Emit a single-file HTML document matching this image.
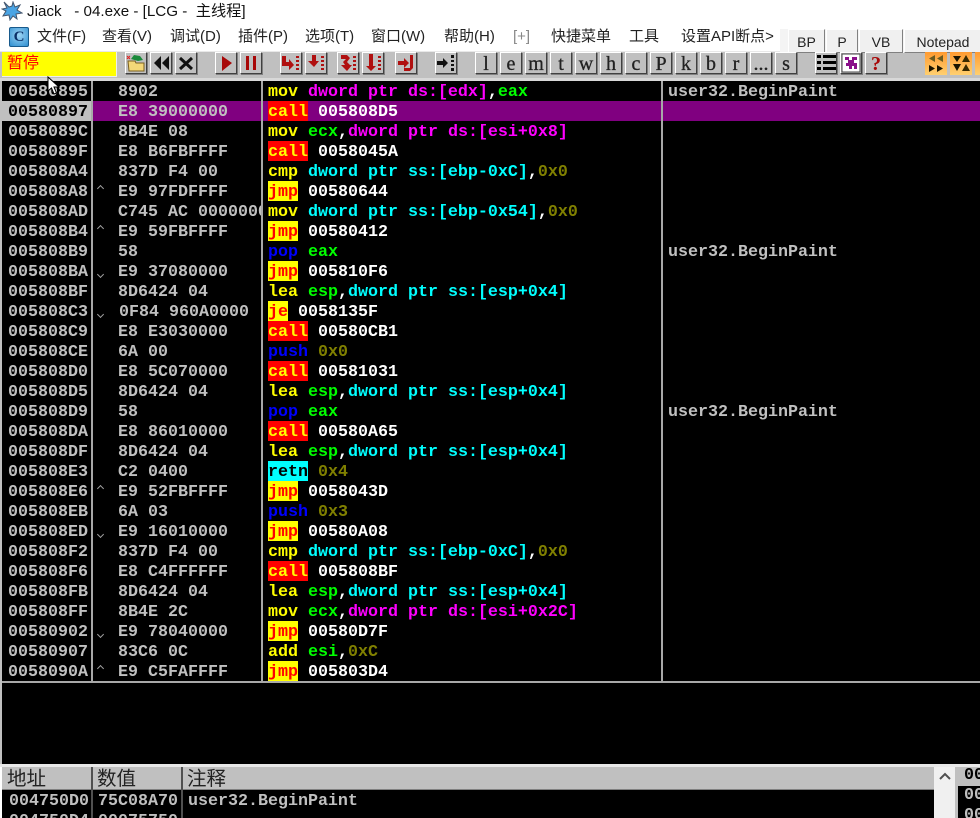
<!DOCTYPE html>
<html><head><meta charset="utf-8"><style>
html,body{margin:0;padding:0;width:980px;height:818px;overflow:hidden;background:#fff}
body{position:relative;font-family:"Liberation Sans","Noto Sans CJK SC",sans-serif}
.a{position:absolute;white-space:pre}
.m{font-family:"Liberation Mono","DejaVu Sans Mono",monospace;font-size:16.67px;font-weight:bold;line-height:24px;color:#c0c0c0}
.menu{font-size:15px;line-height:20px;top:27px;color:#222}
.b{position:absolute;top:52px;width:20px;height:20px;background:#c0c0c0;border:1px solid;border-color:#fff #404040 #404040 #fff;box-shadow:1px 1px 0 #808080;overflow:hidden}
.l{font:20px/23px "Liberation Serif",serif;text-align:center;color:#222;-webkit-text-stroke:.3px #222}
.b svg{position:absolute;left:0;top:0}
.t{position:absolute;top:29px;height:22px;background:#f0f0f0;border:1px solid;border-color:#fff #808080 #808080 #fff;font-size:14px;line-height:24px;text-align:center;color:#222}
#dump{position:absolute;left:2px;top:81px;width:978px;height:600px;background:#000;overflow:hidden}
.r{position:absolute;left:0;width:978px;height:20px}
.x{position:absolute;left:0;width:83px;padding-left:6px;height:20px}
.h{position:absolute;left:116px;width:144px;overflow:hidden;height:24px}
.up,.dn{position:absolute;left:96px;width:4px;height:4px;transform:rotate(45deg)}
.up{top:5px;border-left:1px solid #a0a0a0;border-top:1px solid #a0a0a0}
.dn{top:11px;border-right:1px solid #a0a0a0;border-bottom:1px solid #a0a0a0}
.d{position:absolute;left:266px;height:20px}
.c{position:absolute;left:666px;height:20px}
.Y{color:#ff0}.G{color:#0f0}.C{color:#0ff}.P{color:#f0f}.B{color:#00f}.O{color:#808000}.W{color:#fff}
.j{display:inline-block;height:20px;background:#ff0;color:#f00}
.k{display:inline-block;height:20px;background:#f00;color:#ff0}
.q{display:inline-block;height:20px;background:#0ff;color:#000}
.o{background:linear-gradient(#ff9a30,#ffd070);border:none;width:22px;height:23px;box-shadow:none}
</style></head><body>

<svg class="a" style="left:1px;top:1px" width="22" height="20" viewBox="0 0 22 20"><path d="M3 1l5 5 3-1 1-4 2 5 5-2-3 5 5 3-6 1 1 5-4-3-3 4-1-5-6 1 3-5-4-2 5-1z" fill="#4aa4e4" stroke="#44566e" stroke-width="1"/></svg>
<div class="a" style="left:27px;top:2px;font-size:15.2px;line-height:20px;color:#111">Jiack   - 04.exe - [LCG -  主线程]</div>

<div class="a" style="left:9px;top:27px;width:18px;height:18px;background:radial-gradient(circle at 50% 40%,#9ed4f4,#2f8fd0);border:1px solid #185a8c;border-radius:2px;font:bold 15px/18px 'Liberation Serif',serif;text-align:center;color:#0b2f66">C</div>
<div class="a menu" style="left:37px">文件(F)</div>
<div class="a menu" style="left:102px">查看(V)</div>
<div class="a menu" style="left:170px">调试(D)</div>
<div class="a menu" style="left:238px">插件(P)</div>
<div class="a menu" style="left:305px">选项(T)</div>
<div class="a menu" style="left:371px">窗口(W)</div>
<div class="a menu" style="left:444px">帮助(H)</div>
<div class="a menu" style="left:513px;color:#888">[+]</div>
<div class="a menu" style="left:551px">快捷菜单</div>
<div class="a menu" style="left:629px">工具</div>
<div class="a menu" style="left:681px">设置API断点&gt;</div>

<div class="a" style="left:0;top:51px;width:980px;height:30px;background:#c0c0c0;border-top:1px solid #e8e8e8;box-sizing:border-box"></div>
<div class="a" style="left:0;top:78px;width:980px;height:3px;background:#d8d8d8"></div>
<div class="a" style="left:780px;top:29px;width:200px;height:24px;background:#f4f4f4"></div>
<div class="t" style="left:788px;width:35px">BP</div>
<div class="t" style="left:826px;width:30px">P</div>
<div class="t" style="left:859px;width:42px">VB</div>
<div class="t" style="left:904px;width:76px">Notepad</div>

<div class="a" style="left:2px;top:52px;width:114px;height:24px;background:#ff0;font-size:16px;line-height:24px;color:#f00;text-indent:5px;border-right:1px solid #eee;border-bottom:1px solid #eee">暂停</div>

<div class="b" style="left:125px"><svg width="20" height="20"><path d="M2 8h7l1 2h8v8H3z" fill="#f4d878" stroke="#7a6020"/><path d="M5 6l3-4 6 1 3 4-5 1z" fill="#1a8a3a"/><path d="M1 3l3 3M4 3L1 6" stroke="#e02020"/></svg></div>
<div class="b" style="left:150px"><svg width="20" height="20"><path d="M10 3v14L3 10zM18 3v14l-7-7z" fill="#111"/></svg></div>
<div class="b" style="left:175px"><svg width="20" height="20"><path d="M4 5l12 11M16 5L4 16" stroke="#111" stroke-width="3"/></svg></div>
<div class="b" style="left:215px"><svg width="20" height="20"><path d="M6 3l10 7-10 8z" fill="#a80808"/></svg></div>
<div class="b" style="left:240px"><svg width="20" height="20"><path d="M5 3h3v14H5zM12 3h3v14h-3z" fill="#a80808"/></svg></div>
<div class="b" style="left:280px"><svg width="20" height="20" fill="#b01010"><path d="M1 3h4v6h3V6l5 6-5 5v-4H1z"/><path d="M15 3h3v2h-3zM15 7h3v2h-3zM15 11h3v2h-3zM15 15h3v2h-3z"/></svg></div>
<div class="b" style="left:305px"><svg width="20" height="20" fill="#b01010"><path d="M6 2h4v6h3l-5 6-6-6h4z"/><path d="M15 3h3v2h-3zM15 7h3v2h-3zM15 11h3v2h-3zM15 15h3v2h-3z"/></svg></div>
<div class="b" style="left:337px"><svg width="20" height="20" fill="#b01010"><path d="M3 2h6l3 3-3 4 3 3h2l-5 6-6-6h4l-2-3 3-3H3z"/><path d="M15 3h3v2h-3zM15 7h3v2h-3zM15 11h3v2h-3zM15 15h3v2h-3z"/></svg></div>
<div class="b" style="left:362px"><svg width="20" height="20" fill="#b01010"><path d="M6 1h4v12h3l-5 5-5-5h3z"/><path d="M15 3h3v2h-3zM15 7h3v2h-3zM15 11h3v2h-3zM15 15h3v2h-3z"/></svg></div>
<div class="b" style="left:395px"><svg width="20" height="20" fill="#b01010"><path d="M2 8h6V5l5 5-5 5v-3H2z"/><path d="M14 2h3v13l-3 3H8v-3h6z"/></svg></div>
<div class="b" style="left:435px"><svg width="20" height="20" fill="#111"><path d="M1 8h6V5l5 5-5 5v-3H1z"/><path d="M15 2h3v3h-3zM15 7h3v2h-3zM15 11h3v2h-3zM15 15h3v3h-3z"/></svg></div>

<div class="b l" style="left:475px">l</div>
<div class="b l" style="left:500px">e</div>
<div class="b l" style="left:525px">m</div>
<div class="b l" style="left:550px">t</div>
<div class="b l" style="left:575px">w</div>
<div class="b l" style="left:600px">h</div>
<div class="b l" style="left:625px">c</div>
<div class="b l" style="left:650px">P</div>
<div class="b l" style="left:675px">k</div>
<div class="b l" style="left:700px">b</div>
<div class="b l" style="left:725px">r</div>
<div class="b l" style="left:750px">...</div>
<div class="b l" style="left:775px">s</div>

<div class="b" style="left:815px"><svg width="20" height="20" fill="#000"><path d="M1 2h4v3H1zM7 2h13v3H7zM1 8h4v3H1zM7 8h13v3H7zM1 14h4v3H1zM7 14h13v3H7z"/></svg></div>
<div class="b" style="left:840px"><svg width="20" height="20"><rect x="1" y="1" width="18" height="18" fill="#fff" stroke="#444"/><path d="M4 4h4v3H4zM11 4h5v3h-5zM7 7h3v3H7zM10 7h3v3h-3zM5 10h8v3H5zM13 10h3v3h-3zM8 13h3v3H8zM13 13h3v3h-3z" fill="#8a108a"/></svg></div>
<div class="b" style="left:865px;font:bold 20px/22px 'Liberation Serif',serif;text-align:center;color:#a80808">?</div>
<div class="b o" style="left:925px"><svg width="22" height="23"><path d="M10 3v7L4 6.500zM18 3v7l-6-3.500z" fill="#6a5a20"/><path d="M4 13v7l6-3.500zM12 13v7l6-3.500z" fill="#1a1400"/></svg></div>
<div class="b o" style="left:950px"><svg width="22" height="23"><path d="M3 4h8l-4 6zM3 12h8l-4 7z" fill="#1a1400"/><path d="M12 10h8l-4-7zM12 19h8l-4-7z" fill="#3a2a00"/></svg></div>
<div class="b o" style="left:975px"></div>

<div id="dump" class="m">
<div class="r" style="top:0"><span class="a x">00580895</span><span class="a h">8902</span><span class="a d"><span class="Y">mov</span> <span class="P">dword ptr ds:[edx]</span><span class="W">,</span><span class="G">eax</span></span><span class="a c">user32.BeginPaint</span></div>
<div class="r" style="top:20px;background:#800080"><span class="a x" style="background:#c0c0c0;color:#000">00580897</span><span class="a h">E8 39000000</span><span class="a d"><span class="k">call</span> <span class="W">005808D5</span></span></div>
<div class="r" style="top:40px"><span class="a x">0058089C</span><span class="a h">8B4E 08</span><span class="a d"><span class="Y">mov</span> <span class="G">ecx</span><span class="W">,</span><span class="P">dword ptr ds:[esi+0x8]</span></span></div>
<div class="r" style="top:60px"><span class="a x">0058089F</span><span class="a h">E8 B6FBFFFF</span><span class="a d"><span class="k">call</span> <span class="W">0058045A</span></span></div>
<div class="r" style="top:80px"><span class="a x">005808A4</span><span class="a h">837D F4 00</span><span class="a d"><span class="Y">cmp</span> <span class="C">dword ptr ss:[ebp-0xC]</span><span class="W">,</span><span class="O">0x0</span></span></div>
<div class="r" style="top:100px"><span class="a x">005808A8</span><i class="up"></i><span class="a h">E9 97FDFFFF</span><span class="a d"><span class="j">jmp</span> <span class="W">00580644</span></span></div>
<div class="r" style="top:120px"><span class="a x">005808AD</span><span class="a h">C745 AC 00000000</span><span class="a d"><span class="Y">mov</span> <span class="C">dword ptr ss:[ebp-0x54]</span><span class="W">,</span><span class="O">0x0</span></span></div>
<div class="r" style="top:140px"><span class="a x">005808B4</span><i class="up"></i><span class="a h">E9 59FBFFFF</span><span class="a d"><span class="j">jmp</span> <span class="W">00580412</span></span></div>
<div class="r" style="top:160px"><span class="a x">005808B9</span><span class="a h">58</span><span class="a d"><span class="B">pop</span> <span class="G">eax</span></span><span class="a c">user32.BeginPaint</span></div>
<div class="r" style="top:180px"><span class="a x">005808BA</span><i class="dn"></i><span class="a h">E9 37080000</span><span class="a d"><span class="j">jmp</span> <span class="W">005810F6</span></span></div>
<div class="r" style="top:200px"><span class="a x">005808BF</span><span class="a h">8D6424 04</span><span class="a d"><span class="Y">lea</span> <span class="G">esp</span><span class="W">,</span><span class="C">dword ptr ss:[esp+0x4]</span></span></div>
<div class="r" style="top:220px"><span class="a x">005808C3</span><i class="dn"></i><span class="a h" style="left:117px">0F84 960A0000</span><span class="a d"><span class="j">je</span> <span class="W">0058135F</span></span></div>
<div class="r" style="top:240px"><span class="a x">005808C9</span><span class="a h">E8 E3030000</span><span class="a d"><span class="k">call</span> <span class="W">00580CB1</span></span></div>
<div class="r" style="top:260px"><span class="a x">005808CE</span><span class="a h">6A 00</span><span class="a d"><span class="B">push</span> <span class="O">0x0</span></span></div>
<div class="r" style="top:280px"><span class="a x">005808D0</span><span class="a h">E8 5C070000</span><span class="a d"><span class="k">call</span> <span class="W">00581031</span></span></div>
<div class="r" style="top:300px"><span class="a x">005808D5</span><span class="a h">8D6424 04</span><span class="a d"><span class="Y">lea</span> <span class="G">esp</span><span class="W">,</span><span class="C">dword ptr ss:[esp+0x4]</span></span></div>
<div class="r" style="top:320px"><span class="a x">005808D9</span><span class="a h">58</span><span class="a d"><span class="B">pop</span> <span class="G">eax</span></span><span class="a c">user32.BeginPaint</span></div>
<div class="r" style="top:340px"><span class="a x">005808DA</span><span class="a h">E8 86010000</span><span class="a d"><span class="k">call</span> <span class="W">00580A65</span></span></div>
<div class="r" style="top:360px"><span class="a x">005808DF</span><span class="a h">8D6424 04</span><span class="a d"><span class="Y">lea</span> <span class="G">esp</span><span class="W">,</span><span class="C">dword ptr ss:[esp+0x4]</span></span></div>
<div class="r" style="top:380px"><span class="a x">005808E3</span><span class="a h">C2 0400</span><span class="a d"><span class="q">retn</span> <span class="O">0x4</span></span></div>
<div class="r" style="top:400px"><span class="a x">005808E6</span><i class="up"></i><span class="a h">E9 52FBFFFF</span><span class="a d"><span class="j">jmp</span> <span class="W">0058043D</span></span></div>
<div class="r" style="top:420px"><span class="a x">005808EB</span><span class="a h">6A 03</span><span class="a d"><span class="B">push</span> <span class="O">0x3</span></span></div>
<div class="r" style="top:440px"><span class="a x">005808ED</span><i class="dn"></i><span class="a h">E9 16010000</span><span class="a d"><span class="j">jmp</span> <span class="W">00580A08</span></span></div>
<div class="r" style="top:460px"><span class="a x">005808F2</span><span class="a h">837D F4 00</span><span class="a d"><span class="Y">cmp</span> <span class="C">dword ptr ss:[ebp-0xC]</span><span class="W">,</span><span class="O">0x0</span></span></div>
<div class="r" style="top:480px"><span class="a x">005808F6</span><span class="a h">E8 C4FFFFFF</span><span class="a d"><span class="k">call</span> <span class="W">005808BF</span></span></div>
<div class="r" style="top:500px"><span class="a x">005808FB</span><span class="a h">8D6424 04</span><span class="a d"><span class="Y">lea</span> <span class="G">esp</span><span class="W">,</span><span class="C">dword ptr ss:[esp+0x4]</span></span></div>
<div class="r" style="top:520px"><span class="a x">005808FF</span><span class="a h">8B4E 2C</span><span class="a d"><span class="Y">mov</span> <span class="G">ecx</span><span class="W">,</span><span class="P">dword ptr ds:[esi+0x2C]</span></span></div>
<div class="r" style="top:540px"><span class="a x">00580902</span><i class="dn"></i><span class="a h">E9 78040000</span><span class="a d"><span class="j">jmp</span> <span class="W">00580D7F</span></span></div>
<div class="r" style="top:560px"><span class="a x">00580907</span><span class="a h">83C6 0C</span><span class="a d"><span class="Y">add</span> <span class="G">esi</span><span class="W">,</span><span class="O">0xC</span></span></div>
<div class="r" style="top:580px"><span class="a x">0058090A</span><i class="up"></i><span class="a h">E9 C5FAFFFF</span><span class="a d"><span class="j">jmp</span> <span class="W">005803D4</span></span></div>
</div>

<div class="a" style="left:0;top:81px;width:2px;height:684px;background:#c0c0c0"></div>
<div class="a" style="left:91px;top:81px;width:2px;height:601px;background:#a8a8a8"></div>
<div class="a" style="left:261px;top:81px;width:2px;height:601px;background:#a8a8a8"></div>
<div class="a" style="left:661px;top:81px;width:2px;height:601px;background:#a8a8a8"></div>
<div class="a" style="left:2px;top:681px;width:978px;height:2px;background:#a8a8a8"></div>
<div class="a" style="left:2px;top:683px;width:978px;height:81px;background:#000"></div>

<div class="a" style="left:0;top:764px;width:980px;height:3px;background:#e8e8e8"></div>
<div class="a" style="left:2px;top:767px;width:932px;height:22px;background:#c0c0c0"></div>
<div class="a" style="left:2px;top:790px;width:932px;height:28px;background:#000"></div>
<div class="a" style="left:2px;top:789px;width:932px;height:1px;background:#808080"></div>
<div class="a" style="left:91px;top:767px;width:2px;height:51px;background:#505050"></div>
<div class="a" style="left:181px;top:767px;width:2px;height:51px;background:#505050"></div>
<div class="a" style="left:7px;top:768px;font-size:19.500px;line-height:22px;color:#222">地址</div>
<div class="a" style="left:97px;top:768px;font-size:19.500px;line-height:22px;color:#222">数值</div>
<div class="a" style="left:187px;top:768px;font-size:19.500px;line-height:22px;color:#222">注释</div>
<div class="a m" style="left:9px;top:790px">004750D0</div>
<div class="a m" style="left:98px;top:790px">75C08A70</div>
<div class="a m" style="left:188px;top:790px">user32.BeginPaint</div>
<div class="a m" style="left:9px;top:810px">004750D4</div>
<div class="a m" style="left:98px;top:810px">00075750</div>

<div class="a" style="left:934px;top:767px;width:21px;height:51px;background:#f0f0f0"></div>
<svg class="a" style="left:938px;top:771px" width="14" height="10"><path d="M2 8l5-5 5 5" fill="none" stroke="#505050" stroke-width="2"/></svg>
<div class="a" style="left:955px;top:767px;width:25px;height:51px;background:#c0c0c0"></div>
<div class="a" style="left:958px;top:786px;width:22px;height:32px;background:#000"></div>
<div class="a m" style="left:964px;top:764px;color:#000">00</div>
<div class="a m" style="left:964px;top:784px">00</div>
<div class="a m" style="left:964px;top:804px">00</div>

<svg class="a" style="left:47px;top:76px" width="14" height="20"><path d="M1 1v14l3.500-3 2.500 6 2.500-1-2.500-6h5z" fill="#fff" stroke="#000"/></svg>
</body></html>
